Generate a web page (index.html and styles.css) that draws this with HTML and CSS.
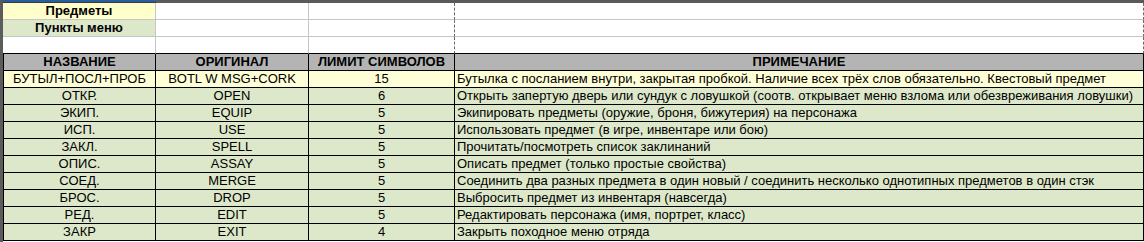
FILE: index.html
```html
<!DOCTYPE html>
<html lang="ru">
<head>
<meta charset="utf-8">
<link rel="stylesheet" href="styles.css">
</head>
<body>
<div class="topbar"><div class="corner"></div><div class="sel"></div><div class="rest"></div></div>
<div class="main">
  <div class="leftbar"></div>
  <div class="sheet">
    <div class="c a yl b">Предметы</div><div class="c"></div><div class="c pb"></div><div class="c pb"></div>
    <div class="c a gr b">Пункты меню</div><div class="c"></div><div class="c pb"></div><div class="c pb"></div>
    <div class="c k"></div><div class="c k"></div><div class="c pb k"></div><div class="c pb k"></div>

    <div class="t h">НАЗВАНИЕ</div><div class="t h">ОРИГИНАЛ</div><div class="t h">ЛИМИТ СИМВОЛОВ</div><div class="t h">ПРИМЕЧАНИЕ</div>

    <div class="t yl2">БУТЫЛ+ПОСЛ+ПРОБ</div><div class="t yl2">BOTL W MSG+CORK</div><div class="t yl2">15</div><div class="t yl2 n">Бутылка с посланием внутри, закрытая пробкой. Наличие всех трёх слов обязательно. Квестовый предмет</div>

    <div class="t gr">ОТКР.</div><div class="t gr">OPEN</div><div class="t gr">6</div><div class="t gr n">Открыть запертую дверь или сундук с ловушкой (соотв. открывает меню взлома или обезвреживания ловушки)</div>
    <div class="t gr">ЭКИП.</div><div class="t gr">EQUIP</div><div class="t gr">5</div><div class="t gr n">Экипировать предметы (оружие, броня, бижутерия) на персонажа</div>
    <div class="t gr">ИСП.</div><div class="t gr">USE</div><div class="t gr">5</div><div class="t gr n">Использовать предмет (в игре, инвентаре или бою)</div>
    <div class="t gr">ЗАКЛ.</div><div class="t gr">SPELL</div><div class="t gr">5</div><div class="t gr n">Прочитать/посмотреть список заклинаний</div>
    <div class="t gr">ОПИС.</div><div class="t gr">ASSAY</div><div class="t gr">5</div><div class="t gr n">Описать предмет (только простые свойства)</div>
    <div class="t gr">СОЕД.</div><div class="t gr">MERGE</div><div class="t gr">5</div><div class="t gr n">Соединить два разных предмета в один новый / соединить несколько однотипных предметов в один стэк</div>
    <div class="t gr">БРОС.</div><div class="t gr">DROP</div><div class="t gr">5</div><div class="t gr n">Выбросить предмет из инвентаря (навсегда)</div>
    <div class="t gr">РЕД.</div><div class="t gr">EDIT</div><div class="t gr">5</div><div class="t gr n">Редактировать персонажа (имя, портрет, класс)</div>
    <div class="t gr">ЗАКР</div><div class="t gr">EXIT</div><div class="t gr">4</div><div class="t gr n">Закрыть походное меню отряда</div>
  </div>
</div>
</body>
</html>
```

FILE: styles.css
```css
html, body {
  margin: 0;
  padding: 0;
  background: #ffffff;
  font-family: "Liberation Sans", Arial, sans-serif;
  font-size: 13px;
  color: #000;
}
.topbar {
  display: flex;
  height: 3px;
}
.corner { width: 3px; background: #5a5a5a; }
.sel { width: 153px; background: #2a5f9e; border-bottom: 1px solid #3a3a3a; box-sizing: border-box; }
.rest { flex: 1; background: #5a5a5a; }
.main {
  display: flex;
  height: 239px;
}
.leftbar {
  width: 3px;
  background: #5c5c5c;
}
.sheet {
  display: grid;
  grid-template-columns: 153px 153px 146px 689px;
  grid-auto-rows: 17px;
  align-content: start;
}
.c, .t {
  box-sizing: border-box;
  border-right: 1px solid #c6c6c6;
  border-bottom: 1px solid #c6c6c6;
  line-height: 16px;
  text-align: center;
  white-space: nowrap;
  overflow: hidden;
}
.pb {
  border-right: 1px dashed #6a6a6a;
}
.k {
  border-bottom-color: #000;
}
.b { font-weight: bold; }
.t {
  border-right-color: #000;
  border-bottom-color: #000;
}
.t:nth-child(4n+1) {
  border-left: 1px solid #000;
}
.h {
  background: #b4b4b4;
  font-weight: bold;
}
.yl { background: #ffffcc; }
.yl2 { background: #ffffd7; }
.gr { background: #dde8cb; }
.n {
  text-align: left;
  padding-left: 2px;
}
```
